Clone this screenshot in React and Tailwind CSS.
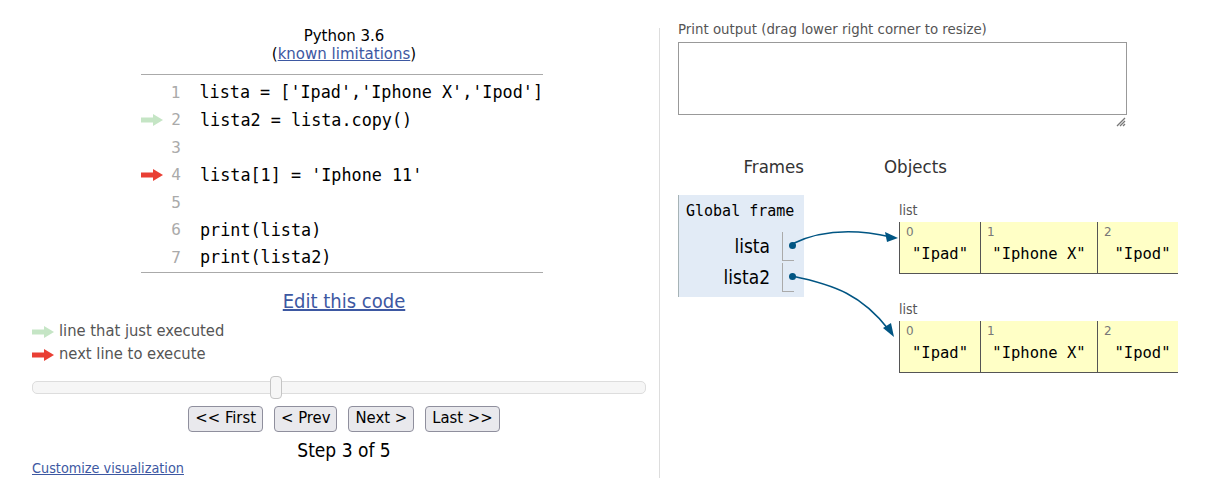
import React from "react";

const SANS = { fontFamily: '"DejaVu Sans", Verdana, sans-serif' };
const COND = { fontFamily: '"DejaVu Sans Condensed", "DejaVu Sans", sans-serif' };
const MONO = { fontFamily: '"DejaVu Sans Mono", "Liberation Mono", monospace' };

const code = [
  "lista = ['Ipad','Iphone X','Ipod']",
  "lista2 = lista.copy()",
  "",
  "lista[1] = 'Iphone 11'",
  "",
  "print(lista)",
  "print(lista2)",
];

const Arrow = ({ color }) => (
  <svg width="22" height="12" viewBox="0 0 22 12">
    <rect x="0" y="3.5" width="13" height="5" fill={color} />
    <polygon points="12,0 22,6 12,12" fill={color} />
  </svg>
);

const items = ['"Ipad"', '"Iphone X"', '"Ipod"'];
const widths = ["w-[81px]", "w-[117px]", "w-[90px]"];

const ListObj = () => (
  <div>
    <div className="h-[19px] text-[14px] leading-[14px] text-[#555]" style={COND}>
      list
    </div>
    <div className="flex h-[52px] bg-[#ffffc6] border-b border-[#555]">
      {items.map((v, i) => (
        <div key={i} className={`${widths[i]} shrink-0 border-l border-[#555]`}>
          <div className="pl-[6px] pt-[3px] text-[12px] leading-[14px] text-[#777]" style={SANS}>
            {i}
          </div>
          <div className="text-center text-[15.5px] leading-[20px] mt-[5px] text-black" style={MONO}>
            {v}
          </div>
        </div>
      ))}
    </div>
  </div>
);

const VarRow = ({ name }) => (
  <div className="flex items-center h-[31px]">
    <div className="w-[103px] text-right text-[19px] text-black pr-[12px]" style={COND}>
      {name}
    </div>
    <div className="w-[12px] h-[29px] border-l border-b border-[#aaa] relative">
      <div className="absolute left-[6px] top-[10px] w-[7px] h-[7px] rounded-full bg-[#005583]" />
    </div>
  </div>
);

export default function App() {
  return (
    <div className="relative w-[1208px] h-[488px] bg-white overflow-hidden flex" style={SANS}>
      {/* left column */}
      <div className="w-[659px] shrink-0 pl-[32px] pr-[3px]">
        <div className="pt-[27px] text-center text-[15px] leading-[19px] text-black">Python 3.6</div>
        <div className="text-center text-[15px] leading-[17px] text-black">
          (<span className="text-[#3d58a2] underline">known limitations</span>)
        </div>
        <div className="mx-auto w-[402px] mt-[11px] border-t border-b border-[#aaa] pt-[4px] translate-x-[-2px]">
          {code.map((line, i) => (
            <div key={i} className="flex items-center h-[27.5px]">
              <div className="w-[25px] flex items-center">
                {i === 1 && <Arrow color="#c5e5c5" />}
                {i === 3 && <Arrow color="#e93f34" />}
              </div>
              <div className="w-[15px] text-right text-[16px] text-[#aaa]" style={MONO}>
                {i + 1}
              </div>
              <div className="pl-[19px] text-[16.8px] text-black whitespace-pre" style={MONO}>
                {line}
              </div>
            </div>
          ))}
        </div>
        <div className="text-center mt-[16px] text-[20px] leading-[24px]" style={COND}>
          <span className="text-[#3d58a2] underline">Edit this code</span>
        </div>
        <div className="mt-[10px] flex flex-col gap-[5px] text-[16.4px] text-[#555]" style={COND}>
          <div className="flex items-center gap-[5px] h-[18px]">
            <Arrow color="#c5e5c5" />
            <span>line that just executed</span>
          </div>
          <div className="flex items-center gap-[5px] h-[18px]">
            <Arrow color="#e93f34" />
            <span>next line to execute</span>
          </div>
        </div>
        <div className="relative mt-[13px] w-[614px] h-[22px] flex items-center">
          <div className="w-full h-[13px] rounded-[5px] border border-[#dddddd] bg-[#f6f6f6]" />
          <div className="absolute left-[238px] top-[-1px] w-[12px] h-[23px] rounded-[4px] border border-[#c5c5c5] bg-[#f6f6f6]" />
        </div>
        <div className="mt-[7px] flex justify-center gap-[11px] text-[16.5px] text-black" style={COND}>
          {["<< First", "< Prev", "Next >", "Last >>"].map((b) => (
            <div
              key={b}
              className="h-[26px] px-[6px] flex items-center rounded-[4px] border border-[#8f8f9d] bg-[#e9e9ed]"
            >
              {b}
            </div>
          ))}
        </div>
        <div className="text-center mt-[7px] text-[19px] leading-[22px] text-black" style={COND}>
          Step 3 of 5
        </div>
        <div className="mt-[-1px] text-[14.3px] leading-[16px] text-[#3d58a2] underline" style={COND}>
          Customize visualization
        </div>
      </div>

      {/* divider */}
      <div className="w-px bg-[#dddddd] mt-[28px] h-[450px] shrink-0" />

      {/* right column */}
      <div className="pl-[18px] w-[519px] overflow-hidden">
        <div className="pt-[22px] text-[13.35px] leading-[16px] text-[#555]">
          Print output (drag lower right corner to resize)
        </div>
        <div className="mt-[4px] w-[449px] h-[73px] border border-[#999] bg-white" />
        <div className="w-[449px] flex justify-end pr-[1px] mt-[2px] h-[12px]">
          <svg width="10" height="10" viewBox="0 0 10 10">
            <path d="M9 1L1 9M9 4L4 9M9 7L7 9" stroke="#777" strokeWidth="1.3" />
          </svg>
        </div>
        <div className="flex mt-[28px] text-[18.5px] leading-[20px] text-[#333]" style={COND}>
          <div className="w-[126px] text-right">Frames</div>
          <div className="ml-[80px]">Objects</div>
        </div>
        <div className="flex mt-[18px]">
          <div className="w-[126px] h-[102px] bg-[#e2ebf6] border-l border-[#a6b3b6] shrink-0">
            <div className="pl-[7px] pt-[6px] text-[15px] leading-[20px] text-black" style={MONO}>
              Global frame
            </div>
            <div className="mt-[10px]">
              <VarRow name="lista" />
              <VarRow name="lista2" />
            </div>
          </div>
          <div className="ml-[95px] pt-[8px] flex flex-col gap-[28px] w-[279px] overflow-hidden shrink-0">
            <ListObj />
            <ListObj />
          </div>
        </div>
      </div>

      {/* reference arrows */}
      <svg className="absolute left-0 top-0 pointer-events-none" width="1208" height="488">
        <path d="M792 244 C 825 228, 860 230, 891 237" fill="none" stroke="#005583" strokeWidth="1.5" />
        <polygon points="898,238 885,232 887,242" fill="#005583" />
        <path d="M792 276 C 835 285, 862 295, 889 330" fill="none" stroke="#005583" strokeWidth="1.5" />
        <polygon points="894,337 883,328 891,323" fill="#005583" />
      </svg>
    </div>
  );
}
